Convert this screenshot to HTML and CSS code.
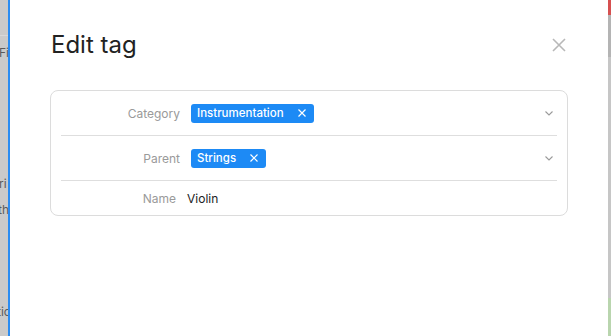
FILE: index.html
```html
<!DOCTYPE html>
<html>
<head>
<meta charset="utf-8">
<link rel="stylesheet" href="styles.css">
</head>
<body>
<div class="screen">
  <div class="backdrop-left">
    <div class="bl-line"></div>
    <span class="bl-text bl-t1">Fi</span>
    <span class="bl-text bl-t2">ri</span>
    <span class="bl-text bl-t3">th</span>
    <span class="bl-text bl-t4">tic</span>
  </div>
  <div class="dialog">
    <div class="header">
      <h1 class="title">Edit tag</h1>
      <button class="close" aria-label="Close">
        <svg width="14" height="14" viewBox="0 0 14 14"><path d="M1 1L13 13M13 1L1 13" stroke="#b8b8b8" stroke-width="1.6" fill="none"/></svg>
      </button>
    </div>
    <div class="card">
      <div class="row">
        <div class="label">Category</div>
        <div class="value">
          <span class="chip">Instrumentation<svg class="chip-x" width="8" height="8" viewBox="0 0 8 8"><path d="M0.5 0.5L7.5 7.5M7.5 0.5L0.5 7.5" stroke="#fff" stroke-width="1.2"/></svg></span>
        </div>
        <div class="chev"><svg width="8" height="5" viewBox="0 0 8 5"><path d="M0.5 0.5L4 4L7.5 0.5" stroke="#9a9a9a" stroke-width="1.1" fill="none"/></svg></div>
      </div>
      <div class="row">
        <div class="label">Parent</div>
        <div class="value">
          <span class="chip">Strings<svg class="chip-x" width="8" height="8" viewBox="0 0 8 8"><path d="M0.5 0.5L7.5 7.5M7.5 0.5L0.5 7.5" stroke="#fff" stroke-width="1.2"/></svg></span>
        </div>
        <div class="chev"><svg width="8" height="5" viewBox="0 0 8 5"><path d="M0.5 0.5L4 4L7.5 0.5" stroke="#9a9a9a" stroke-width="1.1" fill="none"/></svg></div>
      </div>
      <div class="row row-last">
        <div class="label label-name">Name</div>
        <div class="value value-name">Violin</div>
      </div>
    </div>
  </div>
  <div class="backdrop-right">
    <div class="br-red"></div>
    <div class="br-dark"></div>
    <div class="br-mid"></div>
    <div class="br-green"></div>
  </div>
</div>
</body>
</html>
```
FILE: styles.css
```css
* { box-sizing: border-box; }
html, body {
  margin: 0;
  padding: 0;
  height: 100%;
  overflow: hidden;
  font-family: Inter, "Noto Sans", sans-serif;
}
.screen {
  display: flex;
  width: 611px;
  height: 336px;
}
.backdrop-left {
  width: 10px;
  flex: none;
  background: #cacaca;
  border-right: 2px solid #2a8cf2;
  overflow: hidden;
  display: flex;
  flex-direction: column;
  font-size: 12px;
  color: #5a5a5a;
  line-height: 14px;
}
.bl-line {
  height: 1px;
  margin-top: 35px;
  background: #d8d8d8;
}
.bl-text { display: block; white-space: nowrap; }
.bl-t1 { margin-top: 10px; margin-left: -1px; }
.bl-t2 { margin-top: 117px; margin-left: -1px; }
.bl-t3 { margin-top: 12px; margin-left: -2px; }
.bl-t4 { margin-top: 88px; margin-left: -3px; }
.dialog {
  flex: 1;
  background: #fff;
  padding: 30px 40px 0 40px;
}
.header {
  display: flex;
  align-items: center;
  justify-content: space-between;
  height: 30px;
  margin-bottom: 30px;
}
.title {
  margin: 0 0 0 1px;
  font-size: 24px;
  line-height: 30px;
  font-weight: 400;
  color: #222;
}
.close {
  border: 0;
  background: none;
  padding: 0;
  margin-right: 2px;
  width: 14px;
  height: 14px;
  display: flex;
}
.card {
  border: 1px solid #dcdcdc;
  border-radius: 8px;
  padding: 0 10px;
}
.row {
  display: flex;
  align-items: center;
  height: 45px;
  border-bottom: 1px solid #dedede;
}
.row-last {
  height: 34px;
  border-bottom: 0;
}
.label {
  width: 120px;
  flex: none;
  text-align: right;
  font-size: 12px;
  color: #9a9a9a;
  padding-right: 1px;
}
.label-name { padding-right: 5px; }
.value {
  flex: 1;
  margin-left: 10px;
  display: flex;
}
.value-name {
  margin-left: 6px;
  font-size: 12px;
  color: #222;
}
.chip {
  display: inline-flex;
  align-items: center;
  height: 19px;
  padding: 0 8px 0 6px;
  border-radius: 3px;
  background: #1d8af5;
  color: #fff;
  font-size: 11.5px;
  font-weight: 500;
}
.chip-x { margin-left: 14px; }
.chev {
  width: 16px;
  flex: none;
  display: flex;
  justify-content: center;
  margin-top: 1px;
}
.backdrop-right {
  width: 3px;
  flex: none;
  background: #c6c6c6;
  display: flex;
  flex-direction: column;
}
.br-red { height: 15px; background: #d65050; }
.br-dark { height: 42px; background: #b4b4b4; }
.br-mid {
  flex: 1;
  background: #c6c6c6;
}
.br-green { height: 38px; background: #b9d5ae; }
```
